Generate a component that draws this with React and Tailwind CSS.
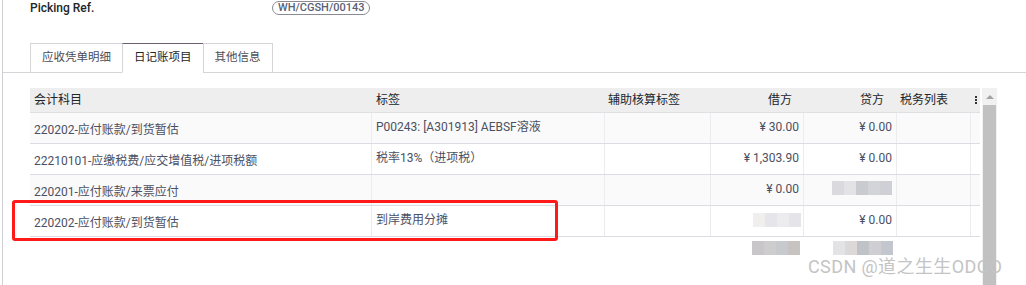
import React from 'react';

const rows = [
  { account: '220202-应付账款/到货暂估', label: 'P00243: [A301913] AEBSF溶液', debit: '¥ 30.00', credit: '¥ 0.00', striped: true },
  { account: '22210101-应缴税费/应交增值税/进项税额', label: '税率13%（进项税）', debit: '¥ 1,303.90', credit: '¥ 0.00' },
  { account: '220201-应付账款/来票应付', label: '', debit: '¥ 0.00', credit: null, striped: true },
  { account: '220202-应付账款/到货暂估', label: '到岸费用分摊', debit: null, credit: '¥ 0.00' },
];

const Mosaic = ({ colors }) => (
  <div className="flex blur-[0.6px]">
    {colors.map((c, i) => (
      <div key={i} className="w-[12px] h-[14px]" style={{ backgroundColor: c }} />
    ))}
  </div>
);

const Tabs = () => {
  const tabs = ['应收凭单明细', '日记账项目', '其他信息'];
  return (
    <div className="flex border-b border-[#d5d5d8] pl-[27px] h-[30px] mt-[27px]">
      {tabs.map((t, i) => (
        <div
          key={t}
          className={`px-[11px] flex items-center border border-[#d5d5d8] -mb-px -ml-px first:ml-0 text-[11.5px] ${
            i === 1 ? 'bg-white border-t-[#6d5f73] border-b-white text-[#212529]' : 'bg-white text-[#4c4c56]'
          }`}
        >
          {t}
        </div>
      ))}
    </div>
  );
};

export default function App() {
  return (
    <div
      className="relative w-[1026px] h-[285px] bg-white overflow-hidden"
      style={{ fontFamily: 'Roboto, "Noto Sans CJK SC", sans-serif' }}
    >
      <div className="ml-[2px] h-full border-l border-[#cfcfd4]">
        {/* header field */}
        <div className="flex items-start pl-[27px] pt-[1px] h-[16px]">
          <div className="w-[242px] text-[12px] font-medium text-[#212529] leading-[14px]">Picking Ref.</div>
          <div className="px-[5px] rounded-full border border-[#8a8a94] text-[11px] leading-[12px] text-[#5a5f75] font-medium">
            WH/CGSH/00143
          </div>
        </div>

        <Tabs />

        {/* table area */}
        <div className="flex pl-[27px] pt-[15px] gap-[2px]">
          <div className="w-[950px] text-[12px]">
            <div className="flex h-[25px] bg-[#eeeeee] border-b border-[#e0e0e4] text-[#212529] items-center">
              <div className="w-[342px] pl-[4px]">会计科目</div>
              <div className="w-[233px] pl-[4px]">标签</div>
              <div className="w-[106px] pl-[3px]">辅助核算标签</div>
              <div className="w-[93px] text-right pr-[12px]">借方</div>
              <div className="w-[93px] text-right pr-[13px]">贷方</div>
              <div className="w-[74px] pl-[3px]">税务列表</div>
              <div className="flex-1 flex flex-col items-center gap-[1px]">
                <span className="w-[2px] h-[2px] bg-[#333]" />
                <span className="w-[2px] h-[2px] bg-[#333]" />
                <span className="w-[2px] h-[2px] bg-[#333]" />
              </div>
            </div>

            {rows.map((r, i) => (
              <div
                key={i}
                className={`flex h-[31px] border-b border-[#dcdce2] text-[#4b5063] ${r.striped ? 'bg-[#fafafa]' : 'bg-white'}`}
              >
                <div className="w-[342px] pl-[4px] pt-[8px] border-r border-[#ececef]">{r.account}</div>
                <div className="w-[233px] pl-[4px] pt-[5px] border-r border-[#ececef]">{r.label}</div>
                <div className="w-[106px] border-r border-[#ececef]" />
                <div className="w-[93px] pr-[4px] pt-[5px] text-right border-r border-[#ececef] flex justify-end">
                  {r.debit ?? (
                    <div className="pt-[2px] -mr-[2px]">
                      <Mosaic colors={['#f1eeee', '#e6e6ea', '#ececef', '#e5e5e9']} />
                    </div>
                  )}
                </div>
                <div className="w-[93px] pr-[4px] pt-[5px] text-right border-r border-[#ececef] flex justify-end">
                  {r.credit ?? (
                    <div className="pt-[1px]">
                      <Mosaic colors={['#d9d9de', '#e3e3e6', '#c9cbd0', '#d3d4d8', '#ced0d5']} />
                    </div>
                  )}
                </div>
                <div className="w-[74px] border-r border-[#ececef]" />
                <div className="flex-1" />
              </div>
            ))}

            {/* totals (redacted) */}
            <div className="flex h-[22px] items-center">
              <div className="w-[681px]" />
              <div className="w-[93px] flex justify-end pr-[4px]">
                <Mosaic colors={['#c8c6c8', '#cdcccf', '#c7c9cc', '#c6c3c1']} />
              </div>
              <div className="w-[93px] flex justify-end pr-[4px]">
                <Mosaic colors={['#e3e3e5', '#dcd8d8', '#bfc3c8', '#cfcfd3', '#c3c6cc']} />
              </div>
            </div>
          </div>

          {/* scrollbar */}
          <div className="w-[15px] h-[200px] flex flex-col bg-[#f1f1f1]">
            <div className="h-[17px] flex items-center justify-center">
              <div className="w-0 h-0 border-l-[4px] border-r-[4px] border-b-[4px] border-l-transparent border-r-transparent border-b-[#a3a3a3]" />
            </div>
            <div className="flex-1 mx-[1px] bg-[#c1c1c1]" />
          </div>
        </div>
      </div>

      {/* annotation box */}
      <div className="absolute left-[12px] top-[200px] w-[546px] h-[41px] border-[3px] border-[#ff1a1a] rounded-[3px]" />

      {/* watermark */}
      <div className="absolute left-[808px] top-[254px] text-[18px] leading-[26px] tracking-[0.4px] text-[#c4c4c4] whitespace-nowrap">
        CSDN @道之生生ODOO
      </div>
    </div>
  );
}
